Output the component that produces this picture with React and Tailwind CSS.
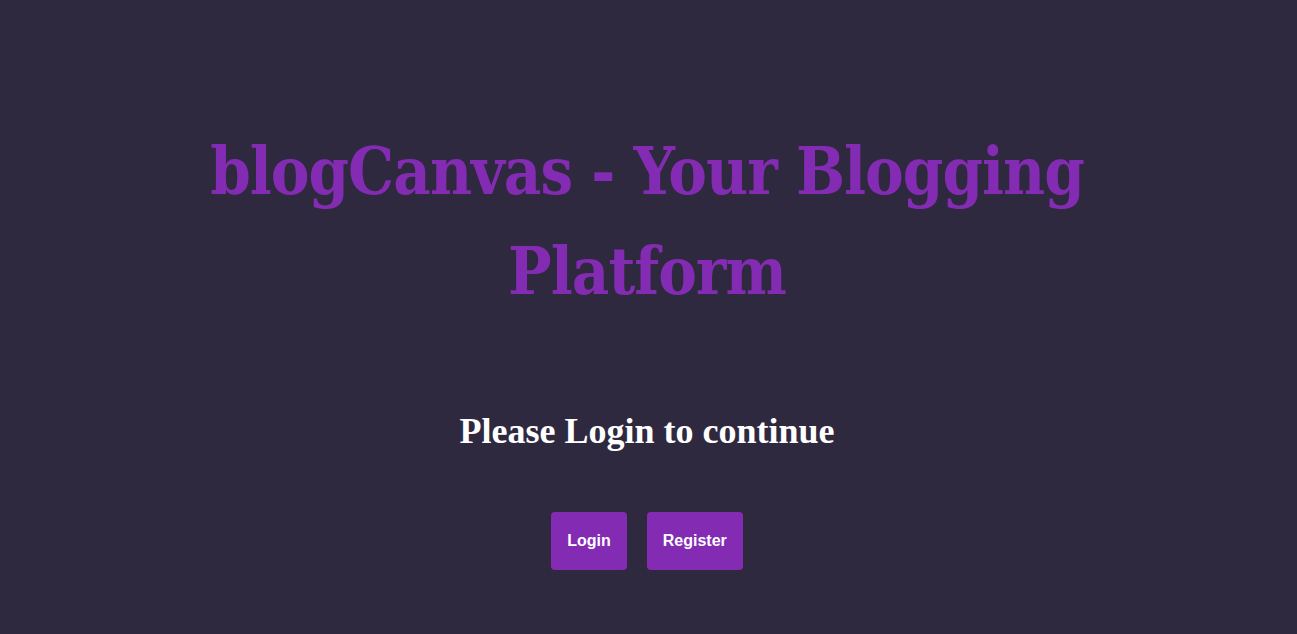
export default function App() {
  return (
    <div className="min-h-[634px] w-full bg-[#2e293f] flex flex-col items-center pr-[3px]">
      <h1 className="mt-[121px] text-center text-[64.5px] leading-[100px] font-bold text-[#842bb3] [font-family:'DejaVu_Serif_Condensed','DejaVu_Serif',serif] tracking-[-1px]">
        blogCanvas - Your Blogging
        <br />
        Platform
      </h1>
      <h2 className="mt-[90px] text-[36px] leading-[41px] font-bold text-white [font-family:'Liberation_Serif',serif]">
        Please Login to continue
      </h2>
      <div className="mt-[60px] flex gap-5">
        <button className="rounded bg-[#842bb3] px-4 py-5 text-[16px] leading-[18px] font-bold text-white [font-family:'Liberation_Sans',Arial,sans-serif]">
          Login
        </button>
        <button className="rounded bg-[#842bb3] px-4 py-5 text-[16px] leading-[18px] font-bold text-white [font-family:'Liberation_Sans',Arial,sans-serif]">
          Register
        </button>
      </div>
    </div>
  );
}
